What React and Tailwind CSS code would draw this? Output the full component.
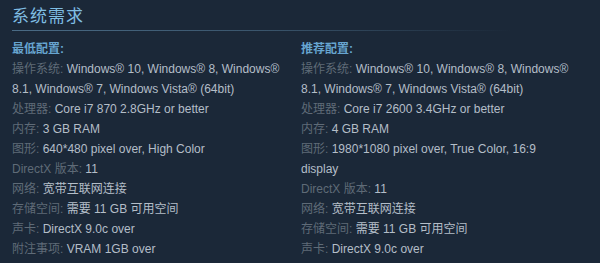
import React from 'react';

const minimum = [
  ['操作系统:', 'Windows® 10, Windows® 8, Windows® 8.1, Windows® 7, Windows Vista® (64bit)'],
  ['处理器:', 'Core i7 870 2.8GHz or better'],
  ['内存:', '3 GB RAM'],
  ['图形:', '640*480 pixel over, High Color'],
  ['DirectX 版本:', '11'],
  ['网络:', '宽带互联网连接'],
  ['存储空间:', '需要 11 GB 可用空间'],
  ['声卡:', 'DirectX 9.0c over'],
  ['附注事项:', 'VRAM 1GB over'],
];

const recommended = [
  ['操作系统:', 'Windows® 10, Windows® 8, Windows® 8.1, Windows® 7, Windows Vista® (64bit)'],
  ['处理器:', 'Core i7 2600 3.4GHz or better'],
  ['内存:', '4 GB RAM'],
  ['图形:', '1980*1080 pixel over, True Color, 16:9 display'],
  ['DirectX 版本:', '11'],
  ['网络:', '宽带互联网连接'],
  ['存储空间:', '需要 11 GB 可用空间'],
  ['声卡:', 'DirectX 9.0c over'],
];

const ReqColumn = ({ heading, items, width }) => (
  <div className={width}>
    <p className="text-[12px] leading-[20px] font-bold text-[#67a5d0]">{heading}</p>
    <ul>
      {items.map(([label, value]) => (
        <li key={label} className="leading-[20px] text-[12px]">
          <span className="text-[#5f6b77]">{label}</span>{' '}
          <span className="text-[#b4bec8]">{value}</span>
        </li>
      ))}
    </ul>
  </div>
);

export default function App() {
  return (
    <div
      className="w-[600px] h-[263px] overflow-hidden bg-[#1b2838]"
      style={{ fontFamily: '"Liberation Sans", Arial, "Noto Sans CJK SC", sans-serif' }}
    >
      {/* Header */}
      <div className="px-3 pt-[6px]">
        <h2 className="text-[17px] leading-[22px] text-[#7fbde2] tracking-[1px]">系统需求</h2>
        <div className="mt-[2px] h-px w-[500px] bg-gradient-to-r from-[#4a6b85] via-[#3a556c] to-transparent" />
      </div>

      {/* Columns */}
      <div className="flex px-3 pt-[8px]">
        <ReqColumn heading="最低配置:" items={minimum} width="w-[277px] mr-[12px]" />
        <ReqColumn heading="推荐配置:" items={recommended} width="w-[270px]" />
      </div>
    </div>
  );
}
